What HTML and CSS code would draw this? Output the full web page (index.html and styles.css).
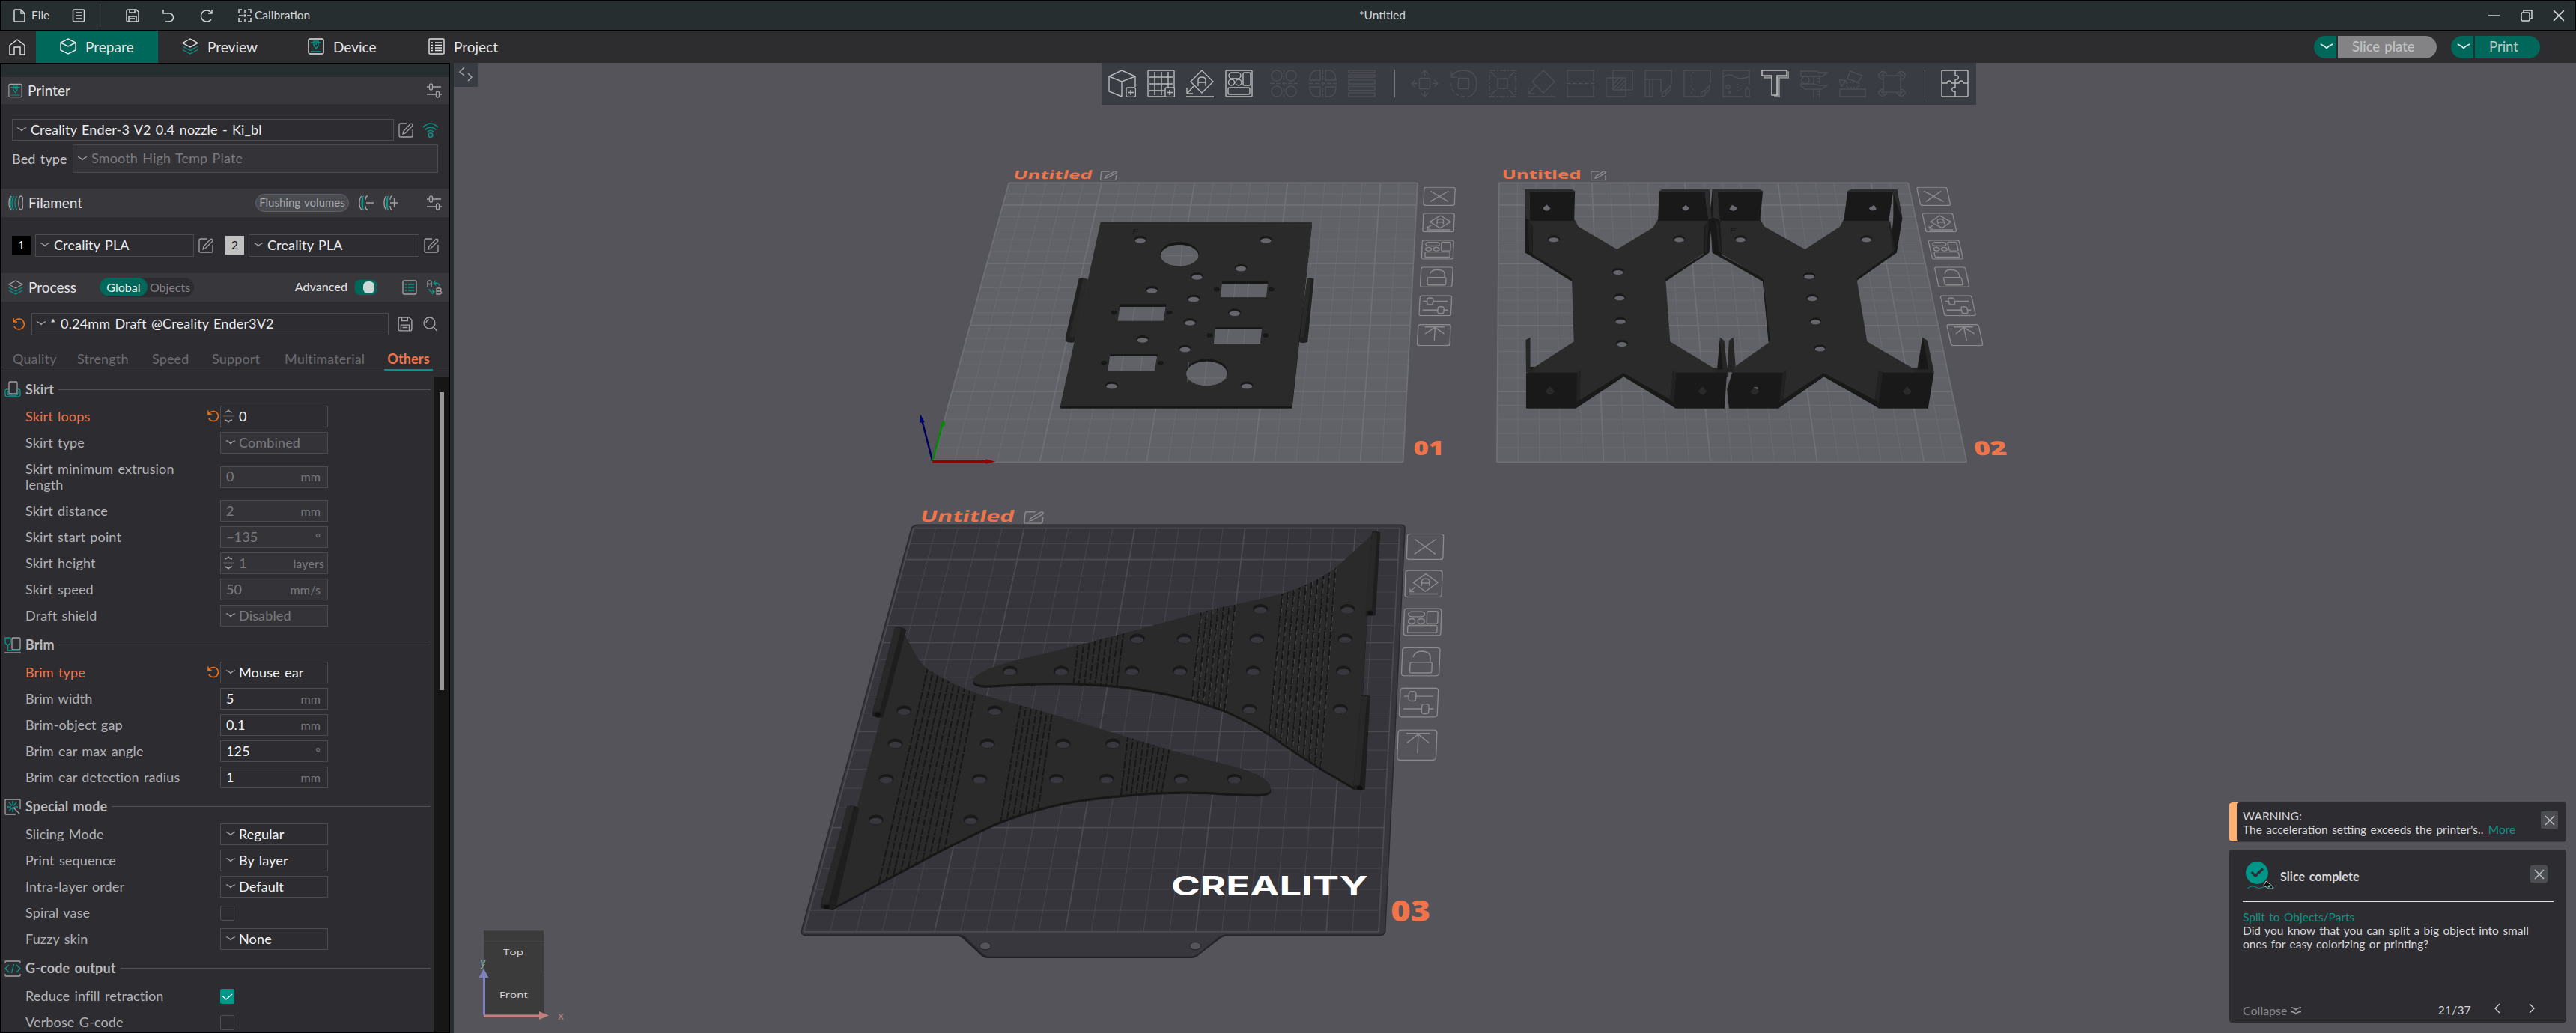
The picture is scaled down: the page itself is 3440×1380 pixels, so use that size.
FILE: index.html
```html
<!DOCTYPE html>
<html lang="en">
<head>
<meta charset="utf-8">
<title>*Untitled</title>
<link rel="stylesheet" href="styles.css">
</head>
<body>
<svg class="sprite" aria-hidden="true">
  <symbol id="chev" viewBox="0 0 14 8"><path d="M1 1.5Q5 3 7 5.5Q9 3 13 1.5"/></symbol>
  <symbol id="edit" viewBox="0 0 20 20"><path class="nss" d="M11 1H3Q1 1 1 3V17Q1 19 3 19H17Q19 19 19 17V9M6 15L7 11L16 1.500Q18 .5 19 2.500Q19 4 18 5L9 14Z"/></symbol>
  <symbol id="sliders" viewBox="0 0 20 20"><path d="M0 5H3M8 5H19M0 15H12M17 15H20"/><rect x="3.500" y="1" width="4" height="8" rx="2"/><rect x="12.500" y="11" width="4" height="8" rx="2"/></symbol>
  <symbol id="undo" viewBox="0 0 18 18"><path d="M1 1V6H6M1.500 6Q4 2 9 2A7 7 0 1 1 2 12"/></symbol>
  <symbol id="save" viewBox="0 0 18 18"><path d="M1 3Q1 1 3 1H14L17 4V15Q17 17 15 17H3Q1 17 1 15ZM5 1V5H12V1M4 17V10H14V17M6 13H12"/></symbol>
  <symbol id="layers" viewBox="0 0 22 22"><path d="M11 1L21 6.500L11 12L1 6.500Z"/><path class="tint" d="M1 11L11 16.500L21 11M1 15.500L11 21L21 15.500"/></symbol>
  <symbol id="printer" viewBox="0 0 22 22"><rect x="1" y="1" width="20" height="20" rx="2"/><path class="tint" d="M4 6H18M8 4H14V10L11 14L8 10ZM11 6V9M4 18H18"/></symbol>
  <symbol id="spool" viewBox="0 0 20 20"><path d="M4 1Q1 3 1 10T4 19M17 1Q20 1 20 10T17 19Q14 19 14 10T17 1"/><path class="tint" d="M8 1Q5 3 5 10T8 19M12 1Q9 3 9 10T12 19M5 1Q3 4 3 10T5 19"/></symbol>
  <symbol id="x" viewBox="0 0 14 14"><path d="M1 1L13 13M13 1L1 13"/></symbol>

  <symbol class="plate-btn" id="p1" viewBox="0 0 100 100"><rect x="2" y="2" width="96" height="96" rx="8"/><path d="M22 22L78 78M78 22L22 78"/></symbol>
  <symbol class="plate-btn" id="p2" viewBox="0 0 100 100"><rect x="2" y="2" width="96" height="96" rx="8"/><path d="M55 14L87 46L55 78L23 46ZM45 58V42Q45 32 55 32T65 42V58M45 48H65M14 87H88M28 62L15 78M15 68V79H26"/></symbol>
  <symbol class="plate-btn" id="p3" viewBox="0 0 100 100"><rect x="2" y="2" width="96" height="96" rx="8"/><rect x="13" y="13" width="42" height="18" rx="9"/><rect x="61" y="12" width="28" height="44" rx="4"/><circle cx="22" cy="47" r="9"/><circle cx="46" cy="47" r="9"/><rect x="12" y="62" width="76" height="26" rx="4"/></symbol>
  <symbol class="plate-btn" id="p4" viewBox="0 0 100 100"><rect x="2" y="2" width="96" height="96" rx="8"/><rect x="23" y="52" width="56" height="36" rx="4"/><path d="M30 34Q34 14 52 14Q74 16 74 36V52"/></symbol>
  <symbol class="plate-btn" id="p5" viewBox="0 0 100 100"><rect x="2" y="2" width="96" height="96" rx="8"/><path d="M12 29H24M42 29H86M12 71H58M76 71H88"/><rect x="24" y="13" width="18" height="32" rx="7"/><rect x="58" y="55" width="18" height="32" rx="7"/></symbol>
  <symbol class="plate-btn" id="p6" viewBox="0 0 100 100"><rect x="2" y="2" width="96" height="96" rx="8"/><path d="M22 13H80M52 15V76M52 15L24 44M52 15L80 44"/></symbol>
</svg>

<div class="app">
<header class="titlebar">
  <div class="menu">
    <svg class="ic m-file" viewBox="0 0 18 18"><path d="M2 2Q2 1 3 1H11L16 6V16Q16 17 15 17H3Q2 17 2 16ZM11 1V6H16"/></svg><span class="m-text">File</span>
    <svg class="ic m-list" viewBox="0 0 18 18"><rect x="1.500" y="1" width="15" height="16" rx="1.500"/><path d="M5 5H13M5 9H13M5 13H13"/></svg>
    <i class="m-sep"></i>
    <svg class="ic m-save"><use href="#save"/></svg>
    <svg class="ic m-undo" viewBox="0 0 18 18"><path d="M2 1V6H7M2 6H10A5.500 5.500 0 0 1 10 17H5"/></svg>
    <svg class="ic m-redo" viewBox="0 0 18 18"><path d="M16 1V6H11M16 6Q13 2 9 2A7.500 7.500 0 1 0 15 14"/></svg>
    <svg class="ic m-cal" viewBox="0 0 18 18"><path d="M5 1H1V6M1 12V17H5M13 1H17V6M17 12V17H13M1 9H6M12 9H17M9 1V5M9 13V17"/><circle cx="9" cy="9" r="1"/></svg><span class="m-text">Calibration</span>
  </div>
  <div class="doc">*Untitled</div>
  <div class="wins">
    <svg class="ic" viewBox="0 0 16 16"><path d="M0 8H15"/></svg>
    <svg class="ic" viewBox="0 0 16 16"><rect x="1" y="4" width="11" height="11" rx="2"/><path d="M4 4V1H15V12H12"/></svg>
    <svg class="ic"><use href="#x"/></svg>
  </div>
</header>

<nav class="nav">
  <a class="home"><svg class="ic" viewBox="0 0 22 22"><path d="M1 8.500L11 1L21 8.500V21H15V11H7V21H1Z"/></svg></a>
  <a class="tab on"><svg class="ic" viewBox="0 0 22 22"><path d="M11 1L21 6V16L11 21L1 16V6ZM1 6L11 11L21 6"/></svg>Prepare</a>
  <a class="tab t-prev"><svg class="ic"><use href="#layers"/></svg>Preview</a>
  <a class="tab t-dev"><svg class="ic"><use href="#printer"/></svg>Device</a>
  <a class="tab t-proj"><svg class="ic" viewBox="0 0 22 22"><rect x="1" y="1" width="20" height="20" rx="1"/><path d="M4 6H6M9 6H18M4 9.500H6M9 9.500H18M4 13H6M9 13H18M4 16.500H6M9 16.500H18"/></svg>Project</a>
  <div class="actions">
    <span class="drop"><svg class="ic"><use href="#chev"/></svg></span><span class="act slice">Slice plate</span>
    <span class="drop d2"><svg class="ic"><use href="#chev"/></svg></span><span class="act print">Print</span>
  </div>
</nav>

<main class="main">
<aside class="side">
  <div class="strip"></div>
  <div class="head"><svg class="ic g21"><use href="#printer"/></svg><b>Printer</b><svg class="ic g20 end"><use href="#sliders"/></svg></div>
  <div class="body b-printer">
    <div class="line"><div class="combo w510"><svg class="ic ch"><use href="#chev"/></svg><span class="t-name">Creality Ender-3 V2 0.4 nozzle - Ki_bl</span></div><svg class="ic g20 ml6"><use href="#edit"/></svg>
      <svg class="ic wifi" viewBox="0 0 20 20"><path d="M0 6Q10 -4 20 6M3 9.500Q10 2.500 17 9.500M5.500 12.500Q10 8 14.500 12.500"/><circle cx="10" cy="16.500" r="2.800"/></svg></div>
    <div class="line bed"><span class="bedlabel">Bed type</span><div class="combo off w488"><svg class="ic ch"><use href="#chev"/></svg>Smooth High Temp Plate</div></div>
  </div>
  <div class="head h38"><svg class="ic g20"><use href="#spool"/></svg><b>Filament</b><span class="pill">Flushing volumes</span>
    <svg class="ic g20 f1" viewBox="0 0 20 20"><path d="M4 1Q1 3 1 10T4 19M12 1Q9 1 9 6M9 14Q9 19 12 19M10 10H20"/><path class="tint" d="M7 1Q4 3 4 10T7 19M5.500 1V19"/></svg>
    <svg class="ic g20 f2" viewBox="0 0 20 20"><path d="M4 1Q1 3 1 10T4 19M12 1Q9 1 9 6M9 14Q9 19 12 19M9 10H20M14.500 4V16"/><path class="tint" d="M7 1Q4 3 4 10T7 19M5.500 1V19"/></svg>
    <svg class="ic g20 f3"><use href="#sliders"/></svg></div>
  <div class="body b-fil">
    <span class="num n1">1</span><div class="combo w212"><svg class="ic ch"><use href="#chev"/></svg>Creality PLA</div><svg class="ic g20 ml6"><use href="#edit"/></svg>
    <span class="num n2">2</span><div class="combo w228"><svg class="ic ch"><use href="#chev"/></svg>Creality PLA</div><svg class="ic g20 ml6"><use href="#edit"/></svg>
  </div>
  <div class="head h38 proc"><svg class="ic g20"><use href="#layers"/></svg><b>Process</b><span class="seg"><em>Global</em><span>Objects</span></span>
    <span class="adv">Advanced</span><span class="toggle"><i></i></span>
    <svg class="ic g20 q1" viewBox="0 0 20 20"><rect x="1" y="1" width="18" height="18" rx="1.500"/><path class="tint" d="M4 6H6M8 6H16M4 10H6M8 10H16M4 14H6M8 14H16"/></svg>
    <svg class="ic g20 q2" viewBox="0 0 20 20"><path d="M1 9V3Q1 1 3.500 1T6 3V9M1 5.500H6M13 11H17Q19 11 19 13T17 15H13M17 15Q19.500 15 19.500 17T17 19H13V11"/><path class="tint" d="M17 8Q17 4 10 4M12 1L9 4L12 7M3 12Q3 16 9 16M7 13L10 16L7 19"/></svg></div>
  <div class="body b-proc">
    <svg class="ic reset"><use href="#undo"/></svg><div class="combo w477"><svg class="ic ch"><use href="#chev"/></svg><span class="t-proc">* 0.24mm Draft @Creality Ender3V2</span></div><svg class="ic g20 s1"><use href="#save"/></svg><svg class="ic g20 s2" viewBox="0 0 20 20"><circle cx="8.500" cy="8.500" r="7.500"/><path d="M14 14L19 19.500M4 9Q4 5 8 4"/></svg>
  </div>
  <div class="ptabs"><span>Quality</span><span>Strength</span><span>Speed</span><span>Support</span><span>Multimaterial</span><span class="on">Others</span></div>
  <div class="settings">
    <div class="list">
      <h3 class="first"><svg class="ic" viewBox="0 0 22 22"><rect x="6" y="1" width="11" height="16" rx="1.500"/><path class="tint" d="M5 11H3Q1 11 1 14V18Q1 21 4 21H18Q21 21 21 18V14Q21 11 19 11H18M5 14H4V16Q4 19 7 19H15Q18 19 18 16V14"/></svg>Skirt</h3>
      <div class="row mod"><label>Skirt loops</label><svg class="ic rs"><use href="#undo"/></svg><div class="f spin"><svg class="ic sp" viewBox="0 0 14 20"><path d="M2 5Q6 4 7 2Q8 4 12 5M2 15Q6 16 7 18Q8 16 12 15"/><path class="dim" d="M0 10H14"/></svg>0</div></div>
      <div class="row"><label>Skirt type</label><div class="f off"><svg class="ic ch"><use href="#chev"/></svg>Combined</div></div>
      <div class="row tall"><label>Skirt minimum extrusion<br>length</label><div class="f off">0<u>mm</u></div></div>
      <div class="row"><label>Skirt distance</label><div class="f off">2<u>mm</u></div></div>
      <div class="row"><label>Skirt start point</label><div class="f off">−135<u>°</u></div></div>
      <div class="row"><label>Skirt height</label><div class="f off spin"><svg class="ic sp" viewBox="0 0 14 20"><path d="M2 5Q6 4 7 2Q8 4 12 5M2 15Q6 16 7 18Q8 16 12 15"/><path class="dim" d="M0 10H14"/></svg>1<u class="ly">layers</u></div></div>
      <div class="row"><label>Skirt speed</label><div class="f off">50<u>mm/s</u></div></div>
      <div class="row"><label>Draft shield</label><div class="f off"><svg class="ic ch"><use href="#chev"/></svg>Disabled</div></div>
      <h3><svg class="ic" viewBox="0 0 22 22"><rect x="10" y="1" width="11" height="16" rx="1.500"/><path d="M0 21H22"/><path class="tint" d="M1 1H8V8L5 11H4L1 8ZM4.500 11V18H21"/></svg>Brim</h3>
      <div class="row mod"><label>Brim type</label><svg class="ic rs"><use href="#undo"/></svg><div class="f"><svg class="ic ch"><use href="#chev"/></svg>Mouse ear</div></div>
      <div class="row"><label>Brim width</label><div class="f">5<u>mm</u></div></div>
      <div class="row"><label>Brim-object gap</label><div class="f">0.1<u>mm</u></div></div>
      <div class="row"><label>Brim ear max angle</label><div class="f">125<u>°</u></div></div>
      <div class="row"><label>Brim ear detection radius</label><div class="f">1<u>mm</u></div></div>
      <h3><svg class="ic" viewBox="0 0 22 22"><path d="M15 21H2Q1 21 1 20V2Q1 1 2 1H20Q21 1 21 2V14M11 11L20 20"/><path class="tint" d="M11 3V9M11 13V18M3 11H9M13 11H18M6 5L10 9.500M16 5L12 9.500M6 16L10 12.500"/></svg>Special mode</h3>
      <div class="row"><label>Slicing Mode</label><div class="f"><svg class="ic ch"><use href="#chev"/></svg>Regular</div></div>
      <div class="row"><label>Print sequence</label><div class="f"><svg class="ic ch"><use href="#chev"/></svg>By layer</div></div>
      <div class="row"><label>Intra-layer order</label><div class="f"><svg class="ic ch"><use href="#chev"/></svg>Default</div></div>
      <div class="row"><label>Spiral vase</label><span class="cb"></span></div>
      <div class="row"><label>Fuzzy skin</label><div class="f"><svg class="ic ch"><use href="#chev"/></svg>None</div></div>
      <h3><svg class="ic" viewBox="0 0 22 22"><path d="M1 4V2Q1 1 2 1H20Q21 1 21 2V4M1 18V20Q1 21 2 21H20Q21 21 21 20V18"/><path class="tint" d="M6 6L1 11L6 16M16 6L21 11L16 16M12.500 5L9.500 17"/></svg>G-code output</h3>
      <div class="row"><label>Reduce infill retraction</label><span class="cb ck"><svg class="ic" viewBox="0 0 19 20"><path d="M3 9.500L8 14L16 7"/></svg></span></div>
      <div class="row"><label>Verbose G-code</label><span class="cb"></span></div>
    </div>
    <div class="track"><i></i></div>
  </div>
</aside>

<section class="view">
<svg class="scene" viewBox="606 84 2834 1296">
  <g id="plate1"></g>
  <g id="plate2"></g>

  <g transform="translate(1200 210) scale(.497449 .333333)" class="z">
    <text class="pname" x="0" y="0" font-size="46" textLength="212" lengthAdjust="spacingAndGlyphs" transform="translate(306 88) skewX(-9)">Untitled</text>
    <g class="pi"><use href="#edit" class="ed" transform="translate(542 55) skewX(-4) scale(2.300 1.950)" width="20" height="20"/></g>
    <g class="pi">
      <use href="#p1" width="100" height="100" transform="matrix(.87 0 -.02 .76 1409 119)"/>
      <use href="#p2" width="100" height="100" transform="matrix(.87 0 -.02 .78 1407 223)"/>
      <use href="#p3" width="100" height="100" transform="matrix(.88 0 -.02 .79 1404 331)"/>
      <use href="#p4" width="100" height="100" transform="matrix(.89 0 -.03 .83 1401 439)"/>
      <use href="#p5" width="100" height="100" transform="matrix(.89 0 -.03 .84 1398 553)"/>
      <use href="#p6" width="100" height="100" transform="matrix(.91 0 -.03 .88 1393 669)"/>
    </g>
    <text class="pnum" x="1382" y="1193" font-size="78" textLength="82" lengthAdjust="spacingAndGlyphs">01</text>
    <path fill="#202020" d="M484 486Q494 480 508 490L472 742Q458 746 448 738V722Z"/>
    <path fill="#292929" d="M496 484L508 492L474 722L458 720Z"/>
    <path fill="#202020" d="M1097 486Q1106 480 1115 488L1098 740Q1086 748 1074 740Z"/>
    <path fill="#292929" d="M1097 486L1108 488L1088 720L1074 724Z"/>
    <path fill="#171717" d="M434 997L1056 996V1007H435ZM1109 262L1110 268L1057 1000L1055 996Z"/>
    <path fill="#2a2a2a" d="M542 260L1109 261L1056 997H434Z"/>
    <text x="627" y="308" font-size="28" fill="#171717" font-style="italic">F</text>
    <g id="holes1"></g>
    <g fill="#171717"><path d="M869 497H992L987 563H864ZM595 589H719L711 657H588ZM850 681H976L971 749H845ZM568 789H695L687 858H560Z"/><ellipse cx="754" cy="389" rx="52" ry="49"/><ellipse cx="828" cy="862" rx="56" ry="54"/>
    <circle cx="854" cy="530" r="8"/><circle cx="1001" cy="530" r="8"/><circle cx="578" cy="622" r="8"/><circle cx="727" cy="622" r="8"/><circle cx="835" cy="714" r="8"/><circle cx="985" cy="714" r="8"/><circle cx="551" cy="824" r="8"/><circle cx="703" cy="824" r="8"/></g>
    <g fill="#616267"><path d="M868 508H991L987 562H864ZM594 600H717L711 656H588ZM849 690H975L971 747H846ZM567 798H694L687 857H561Z"/><ellipse cx="754" cy="394" rx="51" ry="43"/><ellipse cx="827" cy="867" rx="55" ry="49"/></g>
    <path class="gl" d="M904 508L900 562M940 508L936 562M634 600L628 656M684 600L679 656M886 690L881 747M930 690L926 747M604 798L597 857M655 798L649 857M762 352L756 436M778 820L776 900M828 818L820 915M792 394H716M775 885H880"/>
    <g stroke-width="2.500" fill="none"><path stroke="#000060" d="M91 1218L64 1062"/><path stroke="#008a00" d="M91 1218L118 1070"/><path stroke="#900000" stroke-width="3.500" d="M91 1220H236"/></g>
    <path fill="#000070" d="M59 1031L56 1064L70 1062Z"/><path fill="#008a00" d="M122 1053L111 1073L125 1077Z"/><path fill="#900000" d="M260 1220L234 1210V1229Z"/>
  </g>

  <g transform="translate(1970 210) scale(.465561 .333333)" class="z">
    <text class="pname" x="76" y="88" font-size="46" textLength="228" lengthAdjust="spacingAndGlyphs">Untitled</text>
    <g class="pi"><use href="#edit" class="ed" transform="translate(330 55) scale(2.300 1.950)" width="20" height="20"/></g>
    <g class="pi">
      <use href="#p1" width="100" height="100" transform="matrix(.90 0 .12 .76 1264 119)"/>
      <use href="#p2" width="100" height="100" transform="matrix(.91 0 .12 .78 1280 223)"/>
      <use href="#p3" width="100" height="100" transform="matrix(.92 0 .13 .79 1297 331)"/>
      <use href="#p4" width="100" height="100" transform="matrix(.92 0 .13 .83 1315 439)"/>
      <use href="#p5" width="100" height="100" transform="matrix(.93 0 .13 .84 1332 553)"/>
      <use href="#p6" width="100" height="100" transform="matrix(.95 0 .14 .88 1350 669)"/>
    </g>
    <text class="pnum" font-size="78" textLength="94" lengthAdjust="spacingAndGlyphs" transform="translate(1433 1193) skewX(5)">02</text>

    <g fill="#191919" stroke="#191919" stroke-width="1">
      <path d="M143 130L165 275V392L143 382ZM670 130L678 245L670 382L655 390L660 260ZM165 390L145 382L276 496V484ZM655 390L670 382L546 497V486Z"/>
      <path d="M300 968L289 1005L426 878L575 1005L556 968L426 864Z"/>
      <path d="M681 130L675 240L681 382L705 392L700 260ZM1209 130L1224 243L1208 382L1190 390ZM705 392L681 382L825 497V485ZM1195 385L1208 382L1094 494V484Z"/>
      <path d="M885 968L870 1005L1000 878L1158 1005L1144 968L1000 864ZM825 490L848 740H842Z"/>
    </g>
    <path fill="#2a2a2a" d="M155 250H285L296 278L407 369L510 282L524 250H668L657 384L546 486L559 739L682 843H712L726 862V880L600 972H560L425 864L302 972L148 862L168 843L283 739L277 486L165 390L155 260Z"/>
    <path fill="#2a2a2a" d="M698 250H817L830 278L946 369L1046 278L1057 250H1186L1202 376L1094 486L1124 739L1252 843H1300L1316 862L1160 972H1144L999 864L884 972L735 862L749 835L846 739L826 486L708 390Z"/>
    <path fill="#2b2b2b" d="M143 129H278L286 136V140H155L158 255L145 245ZM528 136L536 129H670L678 245L668 250L659 140H528ZM681 129H816L825 136V140H695L703 250L681 242ZM1068 136L1078 129H1209L1224 243L1216 240L1199 140H1068Z"/>
    <g fill="#191919"><path d="M155 138H286L284 255H158ZM528 138H659L668 255H524ZM695 138H825L817 255H702ZM1068 138H1199L1186 255H1057ZM144 245L165 275V390L145 382ZM678 245L657 275L655 388L670 382ZM676 243L702 255L708 390L682 382ZM1199 140L1223 243L1208 382L1200 370Z"/></g>
    <g fill="#222"><path d="M150 252L164 275V388L156 380ZM670 252L660 275L658 380L664 378ZM690 250L698 270L706 386L698 378ZM1190 255L1204 370L1198 376L1186 262Z"/></g>
    <g fill="#252525"><path d="M145 732L158 722V840L170 845V862H146ZM702 722L714 735L724 862H690L680 845H694ZM728 735L740 722L747 838L737 862H722ZM1283 722L1297 735L1316 862H1260L1252 845H1268Z"/></g>
    <path fill="#181818" d="M702 732L710 850H695ZM1284 726L1300 850H1269ZM158 840H170L160 852Z"/>
    <g fill="#191919"><path d="M146 863H292L302 855L300 972L289 1007H146ZM567 855L577 863H722L715 1007H574L560 975ZM737 863H882L892 855L884 972L870 1007H728L722 930ZM1158 855L1170 863H1316L1299 1007H1157L1146 972Z"/></g>
    <path fill="#222" d="M292 862L302 855L300 972L290 985ZM567 855L577 863L570 985L558 972ZM882 862L892 855L884 972L872 985ZM1158 855L1169 863L1158 985L1146 972Z"/>
    <g id="holes2"></g>
    <g fill="#6a6b70"><path d="M205 190L216 205Q205 226 194 205ZM604 191L614 205Q603 224 593 205ZM737 191L752 203Q742 224 729 208ZM1144 191L1151 208Q1138 222 1129 205Z"/></g>
    <g fill="#292929"><path d="M214 918L228 938Q214 966 201 938ZM652 918L664 938Q652 966 639 938ZM801 920L815 938Q801 966 789 938ZM1239 918L1252 938Q1239 966 1226 938Z"/></g>
    <path fill="#606165" d="M798 922L810 921L812 930L802 927Z"/>
    <path fill="none" stroke="#171717" stroke-width="1.500" d="M734 304V285H748M734 294H746"/>
  </g>

  <g transform="translate(1050 660) scale(.586735 .408163)" class="z">
    <path fill="#222226" d="M34 1434L40 1447H390L400 1452L445 1512Q450 1519 465 1519H918Q930 1519 936 1512L990 1452L1000 1447H1352Q1361 1446 1362 1436L1407 115Z"/>
    <path fill="#38373d" stroke="#29292d" stroke-width="1.500" d="M285 112Q290 101 300 101H1398Q1408 101 1408 111L1363 1432Q1362 1442 1352 1443H1000Q990 1446 984 1452L938 1506Q930 1515 918 1515H465Q455 1515 447 1506L408 1452Q402 1443 390 1443H42Q34 1442 34 1432Z"/>
    <circle cx="453" cy="1479" r="12.500" fill="#55545a" stroke="#222226"/><circle cx="931" cy="1479" r="12.500" fill="#55545a" stroke="#222226"/>
  </g>
  <g id="plate3"></g>
  <g transform="translate(1050 660) scale(.586735 .408163)" class="z">
    <text class="pname" font-size="52" textLength="214" lengthAdjust="spacingAndGlyphs" transform="translate(303 91) skewX(-9)">Untitled</text>
    <g class="pi"><use href="#edit" class="ed" transform="translate(542 56) skewX(-4) scale(2.300 2.100)" width="20" height="20"/></g>
    <g class="pi">
      <use href="#p1" width="100" height="100" transform="matrix(.86 0 -.02 .87 1412 129)"/>
      <use href="#p2" width="100" height="100" transform="matrix(.87 0 -.02 .91 1408 248)"/>
      <use href="#p3" width="100" height="100" transform="matrix(.88 0 -.02 .92 1405 373)"/>
      <use href="#p4" width="100" height="100" transform="matrix(.89 0 -.03 .96 1401 501)"/>
      <use href="#p5" width="100" height="100" transform="matrix(.90 0 -.03 .99 1396 633)"/>
      <use href="#p6" width="100" height="100" transform="matrix(.92 0 -.03 1.03 1391 770)"/>
    </g>
    <text class="pnum" x="1376" y="1400" font-size="96" textLength="90" lengthAdjust="spacingAndGlyphs">03</text>
    <defs>
      <path id="wa" d="M1340 125L1247 246Q1190 300 1130 325C1060 352 1000 365 945 387L765 457L610 515C550 535 440 565 425 608Q425 626 462 626C520 622 580 616 640 618C730 620 780 630 840 645Q920 665 1000 708Q1080 760 1130 815L1215 895L1295 963L1312 660L1322 395Z"/>
      <path id="wb" d="M262 440C290 510 300 560 335 585Q380 625 435 653L535 692L606 720L776 795L875 838L1000 885C1060 905 1100 930 1103 965Q1103 984 1060 982C1020 982 960 972 900 974C850 974 800 980 755 986C680 995 620 1010 572 1031Q500 1060 450 1095L355 1162L207 1275L105 1355L85 1345L160 1030L215 730Z"/>
      <clipPath id="ca"><use href="#wa"/></clipPath><clipPath id="cb"><use href="#wb"/></clipPath>
    </defs>
    <use href="#wa" y="8" fill="#171717"/><use href="#wa" fill="#2a2a2a"/>
    <use href="#wb" y="8" fill="#171717"/><use href="#wb" fill="#2a2a2a"/>
    <g clip-path="url(#ca)" id="slotsA"></g>
    <g clip-path="url(#cb)" id="slotsB"></g>
    <g id="holes3"></g>
    <path fill="#1e1e1e" d="M1333 124Q1342 118 1352 126L1341 396Q1330 402 1318 396ZM1309 660Q1320 656 1329 661L1317 968Q1303 975 1290 966ZM247 437Q260 430 273 445L221 728Q208 738 196 726V714ZM139 1022Q152 1016 166 1028L112 1358Q95 1364 78 1355V1342Z"/>
    <path fill="#282828" d="M1333 126L1345 126L1333 378L1318 384ZM1309 662L1322 662L1305 952L1291 955ZM247 438L262 438L212 712L197 714ZM139 1022L154 1022L96 1342L79 1342Z"/>
    <g fill="#0f0f0f"><ellipse cx="1329" cy="389" rx="6" ry="7"/><ellipse cx="1305" cy="962" rx="6" ry="7"/><ellipse cx="208" cy="722" rx="6" ry="7"/><ellipse cx="92" cy="1351" rx="7" ry="6"/></g>
    <text class="brand" x="876" y="1314" font-size="86" textLength="448" lengthAdjust="spacingAndGlyphs">CREALITY</text>
  </g>

  <g>
    <path fill="#3b3b3b" d="M646 1243H726V1300H727V1355H646Z"/>
    <path stroke="#444" d="M646 1257.500H726M646 1243.500H726"/>
    <text class="cube" x="672" y="1276" textLength="27" lengthAdjust="spacingAndGlyphs">Top</text>
    <text class="cube" x="667" y="1333" textLength="38" lengthAdjust="spacingAndGlyphs">Front</text>
    <path fill="#8281c0" d="M645 1356V1306H639.500L646 1294L652.500 1306H648V1356Z"/>
    <path fill="#c17f7e" d="M646 1355.500H720V1351L733 1356.500L720 1362V1359H646Z"/>
    <text x="641.500" y="1290" font-size="14" fill="#7fbf80" class="lt">y</text><text x="642.500" y="1289" font-size="12" fill="#8281c0" class="lt">z</text>
    <text x="745" y="1362" font-size="14" fill="#c17f7e" class="lt" textLength="8" lengthAdjust="spacingAndGlyphs">x</text>
  </g>
</svg>

<div class="collapse"><svg class="ic" viewBox="0 0 18 20"><path d="M7 1L1 7L7 12M12 9L17 14L12 19"/></svg></div>

<div class="toolbar">
  <svg class="ti" viewBox="0 0 37 37"><path d="M18 1L36 9V23M18 36L1 29V9L18 1M1 9L18 16L36 9M18 16V36"/><rect class="bgf" x="24" y="24" width="12.500" height="12.500" rx="2"/><path d="M30 27V34M27 30.500H34"/></svg>
  <svg class="ti" viewBox="0 0 37 37"><rect x="1" y="1" width="35" height="35" rx="1"/><path d="M10 3V34M19 3V34M28 3V25M3 10H34M3 19H34M3 28H25"/><rect class="bgf" x="24" y="24" width="12.500" height="12.500" rx="2"/><path d="M30 27V34M27 30.500H34"/></svg>
  <svg class="ti" viewBox="0 0 37 37"><path d="M21 1L36 16L21 31L6 16ZM16 22V14Q16 10 21 10T26 14V22M16 17H26M0 36H37M10 22L2 31M1 24V32H9"/></svg>
  <svg class="ti" viewBox="0 0 37 37"><rect x="1" y="1" width="35" height="35" rx="1"/><rect x="5" y="4" width="16" height="8" rx="4"/><rect x="24" y="4" width="10" height="17" rx="2"/><circle cx="8.500" cy="17" r="4"/><circle cx="18" cy="17" r="4"/><rect x="4" y="24" width="29" height="9" rx="2"/></svg>
  <svg class="ti d g8" viewBox="0 0 37 37"><circle cx="9" cy="8" r="7"/><circle cx="28" cy="8" r="7"/><circle cx="9" cy="29" r="7"/><circle cx="28" cy="29" r="7"/><path stroke-dasharray="6 2" d="M0 18.500H37M18.500 0V37"/></svg>
  <svg class="ti d" viewBox="0 0 37 37"><path d="M15 1H9Q1 3 1 14H15ZM22 1H28Q36 3 36 14H22ZM15 36H9Q1 34 1 23H15ZM22 36H28Q36 34 36 23H22Z"/><path stroke-dasharray="6 2" d="M0 18.500H37M18.500 0V37"/></svg>
  <svg class="ti d" viewBox="0 0 37 37"><rect x="1" y="1" width="35" height="3"/><rect x="1" y="7" width="35" height="3"/><rect x="1" y="14" width="35" height="5"/><rect x="1" y="22.500" width="35" height="5"/><rect x="1" y="31" width="35" height="5"/></svg>
  <i class="tsep a"></i>
  <svg class="ti d" viewBox="0 0 37 37"><rect x="11.500" y="11.500" width="14" height="14" rx="1"/><path d="M18.500 8V1M14 5.500L18.500 1L23 5.500M18.500 29V36M14 31.500L18.500 36L23 31.500M8 18.500H1M5.500 14L1 18.500L5.500 23M29 18.500H36M31.500 14L36 18.500L31.500 23"/></svg>
  <svg class="ti d" viewBox="0 0 37 37"><rect x="11.500" y="11.500" width="14" height="14" rx="1"/><path d="M2 9Q7 1 18.500 1Q36 2 36 19Q35 34 24 36M2 2V10H10"/><path stroke-dasharray="5 3" d="M20 36Q2 34 1 18"/></svg>
  <svg class="ti d" viewBox="0 0 37 37"><rect x="12" y="12" width="13" height="13"/><rect x="1" y="1" width="35" height="35" stroke-dasharray="8 2 2 2"/><path d="M3 3L10 10M34 3L27 10M3 34L10 27M34 34L27 27"/></svg>
  <svg class="ti d" viewBox="0 0 37 37"><path d="M21 1L36 16L21 31L6 16ZM0 36H37M10 22L2 31M1 24V32H9"/></svg>
  <svg class="ti d" viewBox="0 0 37 37"><path d="M1 15V1H36V15M1 21V36H36V21"/><path stroke-dasharray="6 2" d="M0 18.500H37"/></svg>
  <svg class="ti d" viewBox="0 0 37 37"><rect x="10" y="1" width="26" height="26" rx="1"/><rect x="1" y="11" width="26" height="25" rx="1"/><path d="M10 20L18 11M10 26L24 11M14 27L27 14M20 27L27 19"/></svg>
  <svg class="ti d" viewBox="0 0 37 37"><path d="M1 36V1H36V18M1 13H22V30M7 13V36M11 13V36M1 36H11M24 36Q22 29 28 28Q31 31 28 35ZM29 28L35 21V26L31 31"/></svg>
  <svg class="ti d" viewBox="0 0 37 37"><path d="M22 36H1V1H36V18M24 36Q22 29 28 28Q31 31 28 35ZM29 28L35 21V26L31 31"/><path stroke-dasharray="2 3" d="M13 3L9 9L12 15L10 21L13 27L10 33"/></svg>
  <svg class="ti d" viewBox="0 0 37 37"><path d="M28 36H1V1H36V20M1 11Q6 5 14 8Q24 15 36 9M31 36V27L33 24L36 27V36Z"/><circle cx="7.500" cy="23" r="2.500"/><circle cx="10" cy="30" r="1.500"/><path stroke-dasharray="1 3" d="M21 19V28M25 21V27"/></svg>
  <svg class="ti t" viewBox="0 0 37 37"><path class="sh" d="M4 3H37V11H24V37H18V11H4Z"/><path class="bgf" d="M1 1H34V8H21V34H14V8H1Z"/></svg>
  <svg class="ti d" viewBox="0 0 37 37"><path d="M1 2H22L25 4H36L30 9H1ZM1 21L6 26H28L36 21H25L18 19H1ZM18 9V19M26 9V19M18 26V37M26 26V37M22 12H26M22 16H26M22 29H26M22 33H26"/><circle cx="7" cy="14" r="5"/></svg>
  <svg class="ti d" viewBox="0 0 37 37"><path d="M15 2L31 8L25 17L11 12ZM1 26H35V36H1ZM0 13L9 15L3 22Z"/><path stroke-dasharray="2 2" d="M10 17H26V24H10Z"/></svg>
  <svg class="ti d" viewBox="0 0 37 37"><rect x="7" y="8" width="23" height="22"/><path d="M7 13Q0 12 1 6Q6 -1 12 6M30 13Q37 12 36 6Q31 -1 25 6M7 26Q0 27 1 32Q6 39 12 31M30 26Q37 27 36 32Q31 39 25 31M3 9L9 4M28 4L34 9M3 28L9 34M28 34L34 28"/></svg>
  <i class="tsep b"></i>
  <svg class="ti" viewBox="0 0 37 37"><rect x="1" y="1" width="35" height="35" rx="1"/><path d="M19 1V8H22A3 3 0 0 1 22 13H19V18H14A3 3 0 0 0 8 18H1M19 18H24A3 3 0 0 1 30 18H36M19 18V24H16A3 3 0 0 0 16 29H19V36"/></svg>
</div>

<div class="notes">
  <div class="warn"><div><p>WARNING:</p><p>The acceleration setting exceeds the printer's.. <a>More</a></p></div><span class="xb"><svg class="ic"><use href="#x"/></svg></span></div>
  <div class="card">
    <div class="ct"><svg class="done" viewBox="0 0 38 38"><circle cx="15" cy="15" r="15" fill="#009688"/><path d="M8.500 15L13 19L22 10.500" fill="none" stroke="#2d2c31" stroke-width="3.200" stroke-linecap="round" stroke-linejoin="round"/><path d="M2 36Q8 31 13 34T24 34T38 35" fill="none" stroke="#009688"/><path d="M27 26L36 33V36H31L24 32Z" fill="#0c0c0c" stroke="#d8f0ea" stroke-width=".8"/><circle cx="31" cy="33" r="1.500" fill="#4fe0d0"/></svg><b>Slice complete</b><span class="xb"><svg class="ic"><use href="#x"/></svg></span></div>
    <hr>
    <p class="lk">Split to Objects/Parts</p>
    <p>Did you know that you can split a big object into small</p><p>ones for easy colorizing or printing?</p>
    <div class="cf"><span class="col">Collapse</span><svg class="ic dbl" viewBox="0 0 14 11"><path d="M0 1Q5 1 7 4Q9 1 14 1M0 6.500Q5 6.500 7 9.500Q9 6.500 14 6.500"/></svg><span class="pg">21/37</span><svg class="ic ar a1" viewBox="0 0 8 14"><path d="M7 1L1 7L7 13"/></svg><svg class="ic ar" viewBox="0 0 8 14"><path d="M1 1L7 7L1 13"/></svg></div>
  </div>
</div>
</section>
</main>
</div>
<script src="scene.js"></script>
</body>
</html>
```
FILE: scene.js
```js
const NS = "http://www.w3.org/2000/svg";
function add(parent, tag, attrs) {
  const el = document.createElementNS(NS, tag);
  for (const k in attrs) el.setAttribute(k, attrs[k]);
  parent.appendChild(el);
  return el;
}

// Projective map from the unit square to the quad bl, br, tr, tl.
function project([x0, y0], [x1, y1], [x2, y2], [x3, y3]) {
  const dx1 = x1 - x2, dx2 = x3 - x2, dx3 = x0 - x1 + x2 - x3;
  const dy1 = y1 - y2, dy2 = y3 - y2, dy3 = y0 - y1 + y2 - y3;
  const den = dx1 * dy2 - dx2 * dy1;
  const g = (dx3 * dy2 - dx2 * dy3) / den, h = (dx1 * dy3 - dx3 * dy1) / den;
  const a = x1 - x0 + g * x1, b = x3 - x0 + h * x3;
  const d = y1 - y0 + g * y1, e = y3 - y0 + h * y3;
  return (u, v) => {
    const w = g * u + h * v + 1;
    return [((a * u + b * v + x0) / w).toFixed(1), ((d * u + e * v + y0) / w).toFixed(1)];
  };
}

// 220 mm bed: a line every 10 mm, a heavier one every 50 mm.
function bed(id, bl, br, tr, tl, fill, line, bold) {
  const root = document.getElementById(id), p = project(bl, br, tr, tl);
  add(root, "polygon", { points: [bl, br, tr, tl].join(" "), fill });
  for (const heavy of [false, true]) {
    let d = "";
    for (let i = 0; i <= 22; i++) {
      if ((i % 5 === 0 || i === 22) !== heavy) continue;
      const t = i / 22;
      d += `M${p(t, 0)}L${p(t, 1)}M${p(0, t)}L${p(1, t)}`;
    }
    add(root, "path", { d, fill: "none", stroke: heavy ? bold : line, "stroke-width": heavy ? 1.7 : 1 });
  }
}
bed("plate1", [1245.8, 617.3], [1873.6, 617.3], [1893, 244.3], [1347.3, 244.3], "#616267", "#6b6c71", "#707176");
bed("plate2", [1998.9, 617.3], [2626.4, 617.3], [2548.2, 244.3], [2001.7, 244.3], "#616267", "#6b6c71", "#707176");
bed("plate3", [1073.5, 1244.9], [1841, 1244.9], [1869.1, 705.7], [1220.2, 705.7], "#36353b", "#47474d", "#4c4c52");

function holes(id, list, rx, ry, fill) {
  const root = document.getElementById(id);
  for (const [x, y] of list) {
    add(root, "ellipse", { cx: x, cy: y, rx, ry, fill: "#191919" });
    add(root, "ellipse", { cx: x, cy: y + ry * 0.3, rx: rx * 0.85, ry: ry * 0.66, fill });
  }
}
holes("holes1", [[649, 330], [986, 330], [919, 443], [801, 477], [680, 531], [792, 566], [902, 622], [782, 660], [655, 729], [769, 767], [572, 914], [935, 914]], 17, 15, "#65666b");
holes("holes2", [[225, 327], [585, 327], [410, 458], [414, 561], [417, 655], [421, 746], [761, 327], [1122, 327], [958, 475], [967, 563], [976, 657], [989, 765]], 17, 14, "#65666b");
holes("holes3", [[1079, 376], [1277, 376], [799, 473], [906, 473], [1071, 473], [1272, 473], [509, 578], [626, 578], [787, 578], [896, 578], [1063, 578], [1268, 578], [1054, 703], [1261, 703],
  [268, 708], [475, 708], [248, 816], [458, 816], [630, 816], [743, 816], [227, 932], [440, 932], [615, 932], [729, 932], [899, 932], [1020, 932], [204, 1066], [420, 1066]], 17, 16, "#38373d");

// Rows of slots: n + 1 lines between the left edge and the right edge of a band.
function slots(id, n, l, r, glint) {
  const root = document.getElementById(id);
  for (let i = 0; i <= n; i++) {
    const t = i / n, m = k => l[k] + (r[k] - l[k]) * t;
    const [x1, y1, x2, y2] = [m(0), m(1) - 12, m(2), m(3) + 20];
    const dash = i % 2 ? "9 2.500" : "10 2";
    add(root, "line", { x1, y1, x2, y2, stroke: "#161616", "stroke-width": 1.9, "stroke-dasharray": dash, "stroke-dashoffset": i * 3 });
    if (glint) add(root, "line", { x1: x1 + 2, y1, x2: x2 + 2, y2, stroke: "#4a4a50", "stroke-width": 0.9, "stroke-dasharray": "6 7", "stroke-dashoffset": i * 4 });
  }
}
slots("slotsA", 8, [665, 495, 652, 620], [768, 458, 750, 632], false);
slots("slotsA", 6, [945, 388, 922, 672], [1022, 360, 996, 708], true);
slots("slotsA", 9, [1130, 322, 1097, 790], [1250, 248, 1215, 896], true);
slots("slotsB", 9, [323, 575, 207, 1278], [432, 650, 357, 1164], false);
slots("slotsB", 6, [535, 693, 485, 1078], [606, 720, 571, 1032], false);
slots("slotsB", 8, [778, 798, 760, 988], [873, 838, 852, 976], false);
```
FILE: styles.css
```css
* { box-sizing: border-box; margin: 0; padding: 0; }
body { width: 3440px; height: 1380px; overflow: hidden; background: #000; color: #dededf; font: 18px/21px Lato, "Open Sans", sans-serif; word-spacing: 1.5px; letter-spacing: .15px; }
.sprite { position: absolute; width: 0; height: 0; }
.ic { fill: none; stroke: #a4a4a6; stroke-width: 1.3; flex: none; display: block; }
.nss, .plate-btn * { vector-effect: non-scaling-stroke; }
.app { display: flex; flex-direction: column; width: 3440px; height: 1380px; }

.titlebar { display: grid; grid-template-columns: 1fr auto 1fr; align-items: center; height: 41px; border: 1px solid #000; background: #262e30; font-size: 15.500px; letter-spacing: 0; color: #d4d6d6; }
.titlebar .ic { stroke: #d4d6d6; width: 18px; height: 18px; stroke-width: 1.5; }
.menu { display: flex; align-items: center; padding-left: 16px; }
.m-file { margin-right: 7px; }
.menu .m-list { margin-left: 29px; }
.m-sep { width: 1px; height: 31px; background: #67696b; margin: 0 34px 0 19px; }
.menu .m-undo { margin-left: 30px; }
.menu .m-redo { margin-left: 33px; }
.menu .m-cal { margin: 0 4px 0 33px; }
.m-text { width: 25px; white-space: nowrap; }
.doc { padding-left: 254px; transform: translateX(-1px); }
.wins { display: flex; justify-content: flex-end; gap: 27px; padding-right: 14px; }
.titlebar .wins .ic { width: 16px; height: 16px; }

.nav { display: flex; align-items: center; height: 43px; background: #2d2c2e; font-size: 19px; letter-spacing: 0; color: #e6e6e8; }
.nav .ic { stroke: #e6e6e8; width: 22px; height: 22px; stroke-width: 1.4; }
.home { width: 48px; padding-left: 12px; }
.tab { display: flex; align-items: center; gap: 12px; height: 41px; padding-bottom: 1px; }
.tab.on { width: 163px; height: 43px; padding-left: 32px; background: #00685a; }
.t-prev { width: 168px; padding-left: 32px; }
.t-dev { width: 161px; padding-left: 32px; }
.t-proj { padding-left: 32px; }
.actions { display: flex; margin-left: auto; padding-right: 48px; font-size: 18.500px; color: #c3c6c6; }
.drop { width: 30px; height: 30px; border-radius: 15px 0 0 15px; background: #00685a; display: grid; place-items: center; margin-right: 2px; padding-left: 4px; }
.nav .drop .ic { width: 20px; height: 11px; stroke-width: 1.2; }
.d2 { margin-left: 19px; }
.act { height: 30px; border-radius: 0 15px 15px 0; line-height: 29px; padding-left: 19px; }
.slice { width: 132px; background: #838385; }
.print { width: 87px; background: #00685a; }

.main { display: flex; flex: 1; min-height: 0; }
.side { width: 606px; display: flex; flex-direction: column; border-left: 1px solid #000; border-right: 5px solid #262e30; background: #2d2c31; box-shadow: inset -1px 0 #000, inset 0 -1px #000, inset 0 1px #000; overflow: hidden; }
.strip { height: 18px; margin: 1px 1px 0 0; background: #262e30; flex: none; }
.head { display: flex; align-items: center; height: 36px; margin-right: 1px; padding: 0 10px 1px; background: #38373c; flex: none; position: relative; color: #e4e4e6; }
.head b { font-weight: 400; font-size: 19px; margin: -1px 0 0 7px; letter-spacing: 0; }
.h38 { height: 38px; }
.tint { stroke: #009688; }
.nav .tint { stroke: inherit; }
.side .tint { stroke: #07998a; }
.g21 { width: 19px; height: 20px; }
.g20 { width: 20px; height: 20px; }
.end { margin-left: auto; }
.body { flex: none; }
.b-printer { height: 113px; padding: 20px 0 0 15px; }
.line { display: flex; align-items: center; }
.combo { display: flex; align-items: center; height: 30px; border: 1px solid #4b4b50; background: #2d2c31; padding: 0 0 1px 5px; white-space: nowrap; color: #ececee; }
.ch { width: 14px; height: 8px; margin-right: 5px; }
.w510 { width: 510px; height: 29px; } .w488 { width: 488px; } .w212 { width: 212px; } .w228 { width: 228px; } .w477 { width: 477px; }
.combo.off, .f.off { background: #343338; color: #7b7b7f; }
.ml6 { margin-left: 6px; }
.wifi { width: 20px; height: 20px; stroke: #009688; margin-left: 13px; stroke-width: 1.5; }
.bed { margin-top: 5px; }
.bed .combo { height: 38px; }
.bedlabel { width: 81px; color: #c4c4c6; }
.pill { height: 24px; line-height: 21px; border: 1px solid #606066; border-radius: 12px; background: #4a4a51; color: #a7a7ab; font-size: 15px; letter-spacing: 0; width: 125px; text-align: center; margin-left: auto; white-space: nowrap; }
.f1 { margin-left: 13px; } .f2 { margin-left: 13px; } .f3 { margin-left: 38px; }
.b-fil { display: flex; align-items: center; height: 75px; padding-left: 15px; }
.num { width: 25px; height: 25px; line-height: 23px; text-align: center; margin-right: 6px; font-size: 16px; }
.n1 { background: #000; color: #fff; }
.n2 { background: #c1c1c1; color: #111; margin-left: 16px; }
.seg { display: flex; align-items: center; width: 126px; height: 26px; border-radius: 13px; background: #2d2c31; font-size: 16px; letter-spacing: 0; color: #838387; margin-left: 31px; }
.seg em { font-style: normal; width: 64px; line-height: 25px; border-radius: 13px; background: #00685a; color: #e8eeed; text-align: center; margin-right: 3px; }
.adv { margin-left: auto; font-size: 16.200px; letter-spacing: 0; margin-top: -2px; }
.toggle { width: 29px; height: 20px; border-radius: 6px; background: #00685a; margin-left: 10px; padding: 2px 2px 2px 11px; }
.toggle i { display: block; width: 15px; height: 16px; border-radius: 6px; background: #cdd8d6; }
.q1 { margin-left: 34px; } .q2 { margin-left: 13px; }
.b-proc { display: flex; align-items: center; height: 59px; padding-left: 16px; }
.reset { width: 18px; height: 18px; stroke: #f2700f; margin-right: 7px; stroke-width: 1.6; }
.s1 { margin-left: 12px; } .s2 { margin-left: 14px; }
.ptabs { display: flex; height: 34px; margin-right: 1px; border-bottom: 1px solid #5b5b5f; padding-left: 16px; color: #6b6b6f; line-height: 34px; flex: none; }
.ptabs span:nth-child(1) { width: 86px; } .ptabs span:nth-child(2) { width: 100px; } .ptabs span:nth-child(3) { width: 80px; } .ptabs span:nth-child(4) { width: 97px; } .ptabs span:nth-child(5) { width: 133px; }
.ptabs .on { width: 65px; height: 34px; color: #f0744a; font-weight: 700; border-bottom: 3px solid #009688; text-align: center; }
.settings { display: flex; flex: 1; min-height: 0; margin: 0 1px 1px 0; }
.list { flex: 1; padding-top: 3px; color: #b2b2b5; overflow: hidden; }
.list h3 { display: flex; align-items: center; height: 41px; padding: 2px 4px 0 5px; font-size: 18px; color: #b9b9bc; white-space: nowrap; }
.list h3.first { height: 40px; }
.list h3 .ic { width: 22px; height: 22px; margin-right: 6px; }
.list h3::after { content: ""; flex: 1; height: 1px; background: #515156; margin-left: 6px; }
.row { display: flex; align-items: center; height: 35px; padding-left: 33px; position: relative; line-height: 21px; }
.row label { width: 260px; padding-bottom: 1px; }
.tall { height: 56px; }
.mod label { color: #f0744a; width: 243px; }
.rs { width: 17px; height: 18px; stroke: #f2700f; margin: -2px 0 0 0; stroke-width: 1.6; }
.f { display: flex; align-items: center; width: 144px; height: 29px; border: 1px solid #4b4b50; color: #f4f4f5; padding: 0 9px 1px 7px; }
.f .ch { margin: 0 4px 0 -1px; }
.f u { margin-left: auto; text-decoration: none; font-size: 16px; color: #7b7b7f; }
.f .ly { margin-right: -5px; }
.spin { padding-left: 3px; }
.sp { width: 14px; height: 20px; margin-right: 7px; }
.dim { stroke: #5a5a5e; }
.cb { width: 19px; height: 20px; border: 1px solid #4f4f54; border-radius: 2px; }
.ck { background: #009688; border: 0; }
.ck .ic { stroke: #fff; width: 19px; height: 20px; }
.track { width: 21px; margin-top: 7px; background: #161616; padding: 21px 0 0 8px; }
.track i { display: block; width: 6px; height: 398px; background: #989898; }

.view { position: relative; width: 2834px; background: #55545a; }
.scene { display: block; width: 2834px; height: 1296px; }
.z * { vector-effect: non-scaling-stroke; }
.scene text { word-spacing: 0; letter-spacing: 0; }
.pname { font-family: "Open Sans", sans-serif; font-weight: 700; fill: #f0744a; }
.pnum { font-family: "Open Sans", sans-serif; font-weight: 800; fill: #f0744a; }
.pi { fill: none; stroke: #8b8b8f; stroke-width: 1.4; }
.gl { fill: none; stroke: #6f7075; stroke-width: 1; }
.brand { font-family: Inter, sans-serif; font-weight: 700; fill: #fff; }
.cube { font-family: "Open Sans", sans-serif; font-size: 11.500px; fill: #dcdcdc; }
.lt { font-family: "Open Sans", sans-serif; }
.collapse { position: absolute; left: 0; top: 0; width: 32px; height: 32px; background: #3a3c43; padding: 5px 7px; }
.collapse .ic { width: 18px; height: 20px; stroke-width: 1.5; }

.toolbar { position: absolute; left: 865px; top: 0; width: 1168px; height: 56px; background: #3a3c43; display: flex; align-items: center; gap: 15px; padding: 0 0 1px 9px; }
.ti { width: 37px; height: 37px; flex: none; fill: none; stroke: #b9babc; stroke-width: 1.4; }
.ti.d { stroke: #4d4e55; }
.g8 { margin-left: 8px; }
.bgf { fill: #3a3c43; }
.ti .sh { fill: #77787c; stroke: #8e8f92; }
.ti.t { stroke-width: 1.6; }
.tsep { width: 1px; height: 37px; background: #77787c; flex: none; }
.a { margin: 0 6px 0 10px; }
.b { margin: 0 6px 0 10px; }

.notes { position: absolute; left: 2371px; top: 987px; width: 450px; display: flex; flex-direction: column; gap: 10px; font-size: 15.500px; letter-spacing: 0; line-height: 18px; color: #d8d8da; }
.warn { height: 54px; border: 1px solid #3f3e44; border-left: 0; border-radius: 4px; background: #2d2c31; display: flex; justify-content: space-between; padding: 9px 10px 0 8px; position: relative; box-shadow: inset 10px 0 #ffb070; }
.warn > div { padding-left: 10px; white-space: nowrap; }
.warn a { color: #0d9484; text-decoration: underline; margin-left: 1px; }
.xb { width: 23px; height: 23px; border-radius: 2px; background: #4b4d52; display: grid; place-items: center; margin-top: 3px; }
.xb .ic { width: 14px; height: 14px; stroke: #c8c8ca; }
.card { height: 231px; border-radius: 4px; background: #2d2c31; padding: 14px 17px 0 18px; }
.ct { display: flex; height: 55px; }
.done { width: 38px; height: 38px; margin: 2px 8px 0 4px; }
.ct b { margin-top: 13px; font-size: 16.200px; }
.ct .xb { margin: 7px 8px 0 auto; }
.card hr { border: 0; height: 1px; background: #e4e4e6; margin-bottom: 11px; }
.card p { white-space: nowrap; }
.lk { color: #0d9484; }
.cf { display: flex; align-items: center; margin-top: 69px; height: 20px; }
.col { color: #87878b; margin-top: 2px; font-size: 16px; }
.dbl { width: 14px; height: 11px; margin: 2px 0 0 5px; }
.pg { margin-left: 182px; font-size: 16px; }
.ar { width: 8px; height: 14px; margin-top: -4px; stroke: #d8d8da; margin-left: 38px; }
.a1 { margin-left: 31px; }
```
